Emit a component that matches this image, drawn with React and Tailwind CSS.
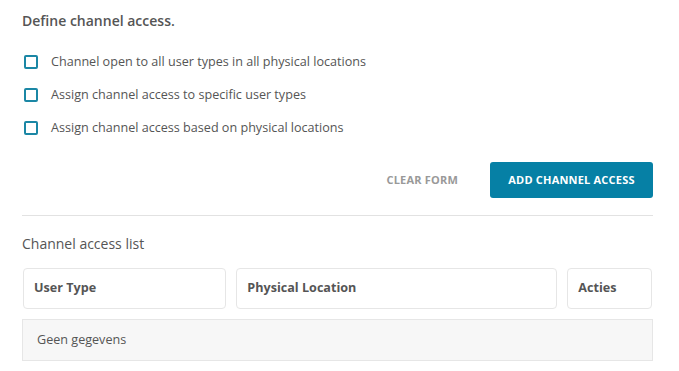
export default function App() {
  const opts = [
    "Channel open to all user types in all physical locations",
    "Assign channel access to specific user types",
    "Assign channel access based on physical locations",
  ];
  return (
    <div className="w-[679px] h-[371px] bg-white text-[#555] pl-[22px] pr-[26px] pt-[11px]" style={{ fontFamily: '"Open Sans", sans-serif' }}>
      <div className="text-[14px] font-semibold leading-[20px] text-[#555]">Define channel access.</div>
      <div className="mt-[21px] flex flex-col gap-[13px] pl-[2px]">
        {opts.map((o) => (
          <label key={o} className="flex items-center h-[20px]">
            <span className="w-[14px] h-[14px] border-2 border-[#1b87a5] rounded-[2px] box-border" />
            <span className="ml-[13px] text-[12.6px] text-[#555]">{o}</span>
          </label>
        ))}
      </div>
      <div className="mt-[24px] flex justify-end items-center">
        <button className="text-[11px] font-bold text-[#999] tracking-[0.2px] mr-[32px]">CLEAR FORM</button>
        <button className="h-[36px] w-[163px] rounded-[3px] bg-[#0680a5] text-white text-[11px] font-bold tracking-[0.2px]">ADD CHANNEL ACCESS</button>
      </div>
      <div className="mt-[17px] border-t border-[#e2e2e2]" />
      <div className="mt-[18px] text-[14px] leading-[20px] text-[#555]">Channel access list</div>
      <div className="mt-[14px] flex gap-[10px] pl-[1px] pr-[1px]">
        <div className="w-[204px] h-[41px] border border-[#e6e6e6] rounded-[4px] flex items-center pl-[10px] text-[12.6px] font-bold text-[#555]">User Type</div>
        <div className="w-[322px] h-[41px] border border-[#e6e6e6] rounded-[4px] flex items-center pl-[10px] text-[12.6px] font-bold text-[#555]">Physical Location</div>
        <div className="w-[85px] h-[41px] border border-[#e6e6e6] rounded-[4px] flex items-center pl-[10px] text-[12.6px] font-bold text-[#555]">Acties</div>
      </div>
      <div className="mt-[10px] h-[42px] border border-[#e6e6e6] bg-[#f7f7f7] flex items-center pl-[14px] text-[12.6px] text-[#555]">Geen gegevens</div>
    </div>
  );
}
